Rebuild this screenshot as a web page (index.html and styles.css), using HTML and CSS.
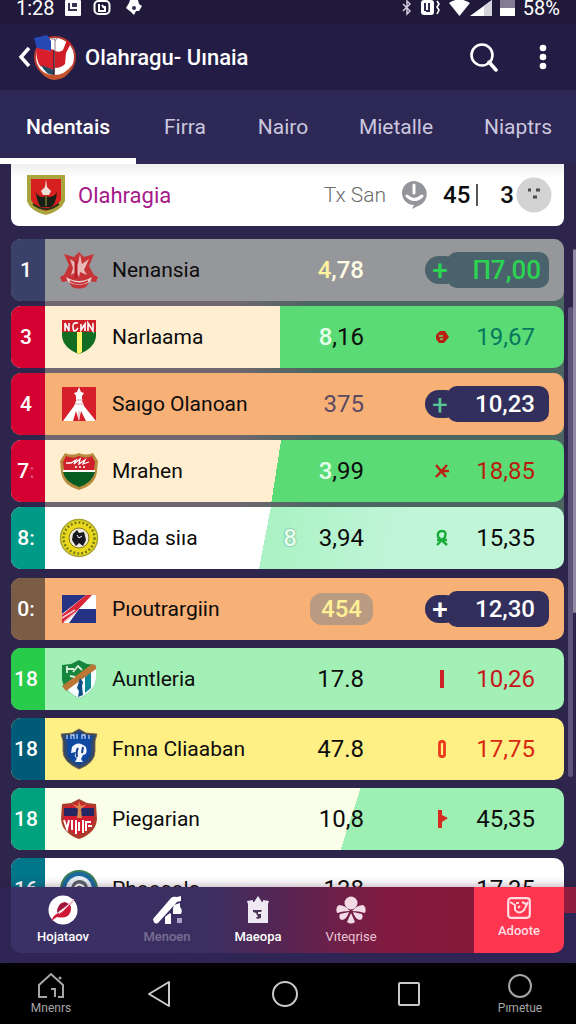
FILE: index.html
```
<!DOCTYPE html>
<html lang="id">
<head>
    <meta charset="UTF-8">
    <meta name="viewport" content="width=device-width, initial-scale=1.0">
    <title>Olahragu- Uınaia</title>
    <link rel="stylesheet" href="styles.css">
</head>
<body>
    <div class="status-bar">
        <span class="clock">1:28</span>
        <svg width="16" height="16" viewBox="0 0 16 16"><rect width="16" height="16" rx="1" fill="#fff"/><path d="M3 3h9v8H3z" fill="#3a3355"/><path d="M6 3v5h6" stroke="#fff" stroke-width="2" fill="none"/></svg>
        <svg width="18" height="16" viewBox="0 0 18 16"><rect x="1.500" y="1" width="15" height="13" rx="4" fill="none" stroke="#fff" stroke-width="2"/><path d="M6 4v7h6V6M9 5l2 3" fill="none" stroke="#fff" stroke-width="2"/></svg>
        <svg class="flower" width="18" height="16" viewBox="0 0 18 16"><path d="M5 0h8l1 4 3 2-3 5h-3l-2 4-3-3-5-4 3-5z" fill="#fff"/><circle cx="9" cy="8" r="2" fill="#33284d"/></svg>
        <div class="status-right">
            <svg width="10" height="16" viewBox="0 0 10 16"><path d="M1 4l7 7-3 3V1l3 3-7 7" fill="none" stroke="#d8d4e2" stroke-width="1.400"/></svg>
            <svg width="21" height="16" viewBox="0 0 21 16"><rect x="1" y="0" width="13" height="15" rx="3" fill="#fff"/><path d="M5 3v8M9 3v8H6" stroke="#33284d" stroke-width="2" fill="none"/><path d="M17 1l2 3-2 3 2 3-2 4" fill="none" stroke="#fff" stroke-width="1.600"/></svg>
            <svg width="43" height="16" viewBox="0 0 43 16"><path d="M0 3Q10-4 21 3L10.500 16z" fill="#fff"/><path d="M21 16L43 0v16z" fill="#fff"/><path d="M35 6l8-6v16h-8z" fill="#d5d3dc"/></svg>
            <svg class="battery" width="15" height="16" viewBox="0 0 15 16"><path d="M0 0h15v16H0z" fill="#fff"/><path d="M0 0h15v8H0z" fill="#827d92"/></svg>
            <span class="charge">58%</span>
        </div>
    </div>

    <header class="app-bar">
        <button class="icon-button back" aria-label="Kembali">
            <svg width="13" height="22" viewBox="0 0 13 22"><path d="M11 2L3 11l8 9" fill="none" stroke="#fff" stroke-width="3.500"/></svg>
        </button>
        <svg class="logo" width="42" height="48" viewBox="0 0 42 48">
            <circle cx="21" cy="24" r="20" fill="#fff" stroke="#b5372f" stroke-width="2"/>
            <path d="M0 5l13-3 4 6v10L3 16z" fill="#2549b5"/>
            <path d="M3 15l14 3v-2l3 1v20L6 33Q1 24 3 15z" fill="#d91f2c"/>
            <path d="M21 18q5 2 8-1l4-10 4 3-5 10-1 11q-4 4-10 4z" fill="#cf1c26"/>
            <path d="M7 32l13 5v5Q12 42 7 32z" fill="#20495f"/>
            <path d="M20 17v26" stroke="#46172a" stroke-width="1.500"/>
            <path d="M17 6h4v12M23 5l-2 3" fill="none" stroke="#98808f"/>
            <path d="M4 34q6 8 16 8 11 0 18-10-3 14-18 15Q9 46 4 34z" fill="#c4532d"/>
        </svg>
        <h1>Olahragu- Uınaia</h1>
        <button class="icon-button search" aria-label="Cari">
            <svg width="30" height="30" viewBox="0 0 30 30"><circle cx="13" cy="13" r="10.500" fill="none" stroke="#fff" stroke-width="2.600"/><path d="M20 20l7 8" stroke="#fff" stroke-width="3.500" stroke-linecap="round"/></svg>
        </button>
        <button class="icon-button more" aria-label="Menu">
            <svg width="8" height="26" viewBox="0 0 8 26" fill="#fff"><circle cx="4" cy="4" r="3.300"/><circle cx="4" cy="13" r="3.300"/><circle cx="4" cy="22" r="3.300"/></svg>
        </button>
    </header>

    <nav class="tabs">
        <a href="#" class="tab active">Ndentais</a>
        <a href="#" class="tab">Firra</a>
        <a href="#" class="tab">Nairo</a>
        <a href="#" class="tab">Mietalle</a>
        <a href="#" class="tab">Niaptrs</a>
    </nav>

    <main class="content">
        <section class="league">
            <svg class="league-crest" width="40" height="42" viewBox="0 0 40 42">
                <path d="M1 1h38v26q-4 10-19 14Q4 37 1 27z" fill="#a9a43c"/>
                <path d="M5 5h30v21q-5 8-15 11Q9 34 5 26z" fill="#d5201f"/>
                <path d="M10 18q3 7 10 4 7 3 11-4-1 12-6 15h-10q-4-4-5-15z" fill="#162016"/>
                <path d="M20 5l1 8 4 4-2 4h-6l-2-4 4-4z" fill="#ecdfd5"/>
                <path d="M20 22v10" stroke="#a9a43c"/>
                <path d="M7 30q13 10 26 0" fill="none" stroke="#2f3217" stroke-width="2"/>
            </svg>
            <h2>Olahragia</h2>
            <span class="league-info">Tx San</span>
            <svg class="chat" width="28" height="30" viewBox="0 0 28 30"><path d="M14 1a13 13 0 0 1 8 23l-10 5 2-4A12 12 0 0 1 14 1z" fill="#93959a"/><path d="M14 5v8M7 16q7 7 15 0" fill="none" stroke="#fff" stroke-width="3" stroke-linecap="round"/></svg>
            <strong>45</strong>
            <span class="divider"></span>
            <strong>3</strong>
            <svg class="face" width="36" height="36" viewBox="0 0 36 36"><circle cx="18" cy="18" r="17.500" fill="#d3d3d3"/><path d="M12 13h3M20 13h4M17 20h4" stroke="#4b4b4b" stroke-width="3"/></svg>
        </section>

        <table class="standings">
            <tbody class="group top-group">
                <tr class="row grey">
                    <td class="rank navy">1</td>
                    <td class="crest"><svg width="40" height="40" viewBox="0 0 40 40"><path d="M5 4l10 3 5-5 5 5 10-3-5 12 5 9 4 2-2 5-6-1-4 6q-7 3-14 0l-4-6-6 1-2-5 4-2 5-10z" fill="#c53336"/><path d="M11 9l8 5 2-10 2 10 7-5-5 11 3 5-7-3-1 5-3-5-5 3 2-7z" fill="#e7b9b8"/><path d="M17 11v17" stroke="#b71f27" stroke-width="3"/><path d="M7 27q13 8 26 0l-2 5q-11 6-22 0z" fill="#ead0cf"/><path d="M11 31q9 5 18 0" stroke="#c53336" fill="none" stroke-width="2"/></svg></td>
                    <td class="name">Nenansia</td>
                    <td class="points"><span class="cream">4</span><span class="pale">,78</span></td>
                    <td class="change pill slate"><span class="mark">+</span><span class="total large">П7,00</span></td>
                </tr>
                <tr class="row split-straight">
                    <td class="rank red">3</td>
                    <td class="crest"><svg width="36" height="36" viewBox="0 0 36 36"><path d="M1 1h34v16q-1 12-17 18Q2 29 1 17z" fill="#126c22"/><path d="M1 1h34v12H1z" fill="#cd2028"/><path d="M16 13h5v20l-3 2-2-1z" fill="#fff36b"/><path d="M4 12V4l4 8V4M17 4q-6-1-5 5t5 0M20 5v6l4-6v7M27 12V4l5 8V4" fill="none" stroke="#fff" stroke-width="1.600"/></svg></td>
                    <td class="name">Narlaama</td>
                    <td class="points"><span class="white">8</span>,16</td>
                    <td class="change teal-text"><span class="mark"><svg width="14" height="14" viewBox="0 0 14 14"><path d="M5 1h5l4 6-5 6H4L1 9V5z" fill="#b92112"/><path d="M4 6h4M5 9h3" stroke="#69dc70" stroke-width="1.500"/></svg></span><span class="total">19,67</span></td>
                </tr>
                <tr class="row orange">
                    <td class="rank red">4</td>
                    <td class="crest"><svg width="36" height="36" viewBox="0 0 36 36"><path d="M1 1h34v34H1z" fill="#d61f2a"/><path d="M18 1l2 5 3 1-2 3v5l2 5 12 15H25l-5-10-2 10-3-10-3 10H2l11-15 2-5v-5l-2-3 3-1z" fill="#fff"/><path d="M15 14h7M14 18h9M18 25v8" stroke="#d7a8aa"/></svg></td>
                    <td class="name">Saıgo Olanoan</td>
                    <td class="points muted">375</td>
                    <td class="change pill dark green-mark"><span class="mark">+</span><span class="total">10,23</span></td>
                </tr>
                <tr class="row split-cream">
                    <td class="rank red">7<span class="dots">:</span></td>
                    <td class="crest"><svg width="40" height="40" viewBox="0 0 40 40"><path d="M6 2q7 3 14 0 7 3 14 0l5 8-1 10q-1 14-18 19Q3 34 2 20L1 10z" fill="#b98b3e"/><path d="M7 5q7 3 13 0 7 3 13 0l3 6-1 8H5L4 11z" fill="#cf202c"/><path d="M4 21h32q-3 11-16 15Q6 31 4 21z" fill="#075d21"/><path d="M4 20h32" stroke="#fff" stroke-width="2"/><path d="M7 12h5l5-3-2 4 6-5-1 5 6-4-2 4 6-2M16 16h2M20 16h2M24 16h2" fill="none" stroke="#fff" stroke-width="1.300"/></svg></td>
                    <td class="name">Mrahen</td>
                    <td class="points"><span class="white">3</span>,99</td>
                    <td class="change brick-text"><span class="mark"><svg width="16" height="16" viewBox="0 0 16 16"><path d="M2 2l10 12M13 2L2 14M7 8h8" stroke="#bd2012" stroke-width="2.400"/></svg></span><span class="total">18,85</span></td>
                </tr>
                <tr class="row split-white">
                    <td class="rank teal">8:</td>
                    <td class="crest"><svg width="40" height="40" viewBox="0 0 40 40"><circle cx="20" cy="20" r="18.500" fill="#ead81d" stroke="#a5a331" stroke-width="1.500"/><circle cx="20" cy="20" r="15.500" fill="none" stroke="#767b1b" stroke-width="2.500" stroke-dasharray="2 2"/><circle cx="20" cy="20" r="10" fill="#eee9dc" stroke="#84760f"/><path d="M14 16l4-4 2 3 5-1 2 8-3 6-4-3-3 3-4-6z" fill="#17181d"/><path d="M18 17l2 3 3-2" stroke="#fff" fill="none"/></svg></td>
                    <td class="name">Bada siıa</td>
                    <td class="points"><span class="ghost">8</span>3,94</td>
                    <td class="change"><span class="mark"><svg width="14" height="18" viewBox="0 0 14 18"><path d="M2 16L10 8q2-6-3-6T3 8l9 8M2 11h10" fill="none" stroke="#16ac37" stroke-width="2.400"/></svg></span><span class="total">15,35</span></td>
                </tr>
            </tbody>
            <tbody class="group">
                <tr class="row orange">
                    <td class="rank brown">0:</td>
                    <td class="crest"><svg width="36" height="30" viewBox="0 0 36 30"><path d="M1 1h34v28H1z" fill="#fff"/><path d="M1 1h24L1 20zM18 15h17v14H8z" fill="#263284"/><path d="M1 21L25 1h6L12 21 2 29H1z" fill="#d92739"/><path d="M1 24l13-8M3 28l11-9" stroke="#f4c7cf" stroke-width="1.500"/></svg></td>
                    <td class="name">Pıoutrargiin</td>
                    <td class="points"><span class="points-pill">454</span></td>
                    <td class="change pill dark"><span class="mark">+</span><span class="total">12,30</span></td>
                </tr>
                <tr class="row mint">
                    <td class="rank green">18</td>
                    <td class="crest"><svg width="36" height="40" viewBox="0 0 36 40"><path d="M1 6l9-1 8-4 8 4 9 1v14q-1 12-17 19Q2 32 1 20z" fill="#16853d"/><path d="M35 6v14q-1 12-17 19Q9 35 5 29z" fill="#f5fcff"/><path d="M30 11v18l-6 5V17z" fill="#0e8894"/><path d="M1 27L31 5l4 2v3L5 32z" fill="#b97634"/><path d="M19 19l3 4-1 4 1 9-5 2 1-6-2-3z" fill="#104d86"/><path d="M5 10h8M6 7v7M12 13l5-6 4 4M9 17l5 1" stroke="#d9efd9" stroke-width="1.800" fill="none"/></svg></td>
                    <td class="name">Auntleria</td>
                    <td class="points">17.8</td>
                    <td class="change red-text"><span class="mark"><svg width="4" height="18" viewBox="0 0 4 18"><path d="M0 0h4v18H0z" fill="#cf2028"/></svg></span><span class="total">10,26</span></td>
                </tr>
                <tr class="row yellow">
                    <td class="rank petrol">18</td>
                    <td class="crest"><svg width="38" height="42" viewBox="0 0 38 42"><path d="M1 6l11-1 7-4 7 4 11 1-2 7v10q0 12-16 18Q3 34 3 23V13z" fill="#344965" stroke="#806d4e"/><path d="M5 8q9 0 14-4 5 4 14 4l-2 6v9q0 9-12 14Q7 32 7 23v-9z" fill="#0e48a1"/><path d="M7 11V7M11 11V7h3v4M17 11V6M22 11V7h3v4M29 11V7" stroke="#b9cdf0" stroke-width="1.300" fill="none"/><path d="M12 19q6-7 14 0 2 8-3 8l-2 4 2 3h-8l2-4q-4-1-1-6l-5 1z" fill="#f2f6ff"/><path d="M18 20q-2 3-1 9M23 19l-1 6" stroke="#123d88" stroke-width="2" fill="none"/></svg></td>
                    <td class="name">Fnna Cliaaban</td>
                    <td class="points">47.8</td>
                    <td class="change scarlet-text"><span class="mark"><svg width="8" height="18" viewBox="0 0 8 18"><rect x="1.500" y="1.500" width="5" height="15" rx="2" fill="none" stroke="#ed3a1a" stroke-width="2.800"/></svg></span><span class="total">17,75</span></td>
                </tr>
                <tr class="row split-mint">
                    <td class="rank emerald">18</td>
                    <td class="crest"><svg width="38" height="42" viewBox="0 0 38 42"><path d="M2 6l9-1 8-4 8 4 9 1 1 15q-1 14-18 20Q2 35 1 21z" fill="#ad3b2c"/><path d="M4 9l9-2 6-3 6 3 9 2v11q-1 11-15 17Q4 31 4 20z" fill="#d41e32"/><path d="M4 10h30v8H4z" fill="#252762"/><path d="M12 6l6 2 1-5 2 5 6-2-6 5 1 9h-5l1-9z" fill="#d98649"/><path d="M4 22l3 9 2-9M12 22v10M16 22v14M19 24v9M23 22v13M26 33v-9h5M28 28h4" stroke="#fff" stroke-width="2" fill="none"/></svg></td>
                    <td class="name">Piegarian</td>
                    <td class="points">10,8</td>
                    <td class="change"><span class="mark"><svg width="12" height="18" viewBox="0 0 12 18"><path d="M2 0h4v5l6 3-6 4v6H2z" fill="#d72b20"/></svg></span><span class="total">45,35</span></td>
                </tr>
                <tr class="row plain">
                    <td class="rank sea">16</td>
                    <td class="crest"><svg width="40" height="40" viewBox="0 0 40 40"><circle cx="20" cy="20" r="19" fill="#397f55"/><circle cx="20" cy="20" r="17" fill="#1c69a0"/><circle cx="20" cy="20" r="13" fill="#e5eef4"/><path d="M12 20q1-9 9-9 8 1 8 9l-5 8h-7z" fill="#5a606a"/><path d="M16 18q4-5 9 0" stroke="#fff" stroke-width="2" fill="none"/></svg></td>
                    <td class="name">Phoosola</td>
                    <td class="points">138</td>
                    <td class="change"><span class="mark"></span><span class="total">17,35</span></td>
                </tr>
            </tbody>
        </table>
        <div class="scroll-track"></div>
        <div class="scroll-thumb"></div>
    </main>

    <div class="dock">
        <nav class="bottom-nav">
            <a href="#">
                <svg width="30" height="30" viewBox="0 0 30 30"><circle cx="15" cy="15" r="14.500" fill="#fff"/><path d="M28 3L14 17Q6 18 3 26l6-4q10 2 13-4 2-5 0-8z" fill="#cf1737"/><path d="M9 18q0-10 8-11l4 2z" fill="#a3163a"/><path d="M11 19q6-5 15-15" stroke="#f1c5cf" fill="none"/></svg>
                <span>Hojataov</span>
            </a>
            <a href="#" class="dim">
                <svg width="32" height="30" viewBox="0 0 32 30" fill="#fff"><path d="M2 24L20 3q2-2 6-1l4-1v5l-4 1L7 28q-4 2-5-4z"/><path d="M23 10l6-2v4q3 3 1 7h-8v-6zM14 22l5-4 1 1v10h-6z"/><path d="M26 23h5v5h-5z" fill="#a8a2cc"/></svg>
                <span>Menoen</span>
            </a>
            <a href="#">
                <svg width="24" height="30" viewBox="0 0 24 30"><path d="M2 7h6l4-6 4 6h6v21H2z" fill="#ede8f1"/><path d="M1 6l6-1v4H2zM23 6l-6-1v4h5z" fill="#ede8f1"/><path d="M7 15h9l-1 2h-3v2h3v4l-4 1-1-2h2l-2-4-3-1z" fill="#4b3357"/></svg>
                <span>Maeopa</span>
            </a>
            <a href="#" class="wide">
                <svg width="30" height="30" viewBox="0 0 30 30" fill="#f2dbe5"><circle cx="15" cy="8" r="6.500"/><path d="M14 16Q7 16 1 18-1 12 3 10q6 0 11 6zM16 16q7 0 13 2 2-6-2-8-6 0-11 6zM13 17l-9 2q-2 5 2 6 5-1 7-8zM17 17l9 2q2 5-2 6-5-1-7-8zM15 18l-4 9q4 3 8 0z"/></svg>
                <span>Vıteqrise</span>
            </a>
            <a href="#" class="highlight">
                <svg width="24" height="22" viewBox="0 0 24 22"><rect x="1.200" y="1.200" width="21.600" height="19.600" rx="3" fill="none" stroke="#ffdce2" stroke-width="2.200"/><path d="M3 5l5 3v5q4 5 9 0l4-8M9 6h3M15 5l4 2M11 11l2-2" fill="none" stroke="#ffdce2" stroke-width="2"/></svg>
                <span>Adoote</span>
            </a>
        </nav>
        <div class="edge-strip"></div>
    </div>

    <footer class="system-nav">
        <button>
            <svg width="28" height="28" viewBox="0 0 28 28"><path d="M10 25H2V13L14 2l12 11v12h-5M14 17h4v8" fill="none" stroke="#a6a6a6" stroke-width="2"/><circle cx="23" cy="6" r="1.500" fill="#a6a6a6"/></svg>
            <span>Mnenrs</span>
        </button>
        <button aria-label="Mundur"><svg width="24" height="28" viewBox="0 0 24 28"><path d="M22 2v24L2 14z" fill="none" stroke="#c9c9c9" stroke-width="2" stroke-linejoin="round"/></svg></button>
        <button aria-label="Beranda"><svg width="28" height="28" viewBox="0 0 28 28"><circle cx="14" cy="14" r="12" fill="none" stroke="#c9c9c9" stroke-width="2"/></svg></button>
        <button aria-label="Aplikasi"><svg width="24" height="26" viewBox="0 0 24 26"><rect x="2" y="2" width="20" height="22" rx="1" fill="none" stroke="#c9c9c9" stroke-width="2"/></svg></button>
        <button>
            <svg width="28" height="28" viewBox="0 0 28 28"><circle cx="14" cy="14" r="11" fill="none" stroke="#a6a6a6" stroke-width="2"/></svg>
            <span>Pımetue</span>
        </button>
    </footer>
</body>
</html>
```

FILE: styles.css
```
* {
    box-sizing: border-box;
}
body {
    margin: 0;
    height: 100vh;
    display: flex;
    flex-direction: column;
    overflow: hidden;
    background-color: #2d254b;
    color: #0c0c0c;
    font-family: Roboto, "Noto Sans", sans-serif;
}
svg {
    display: block;
    flex-shrink: 0;
}
a {
    text-decoration: none;
}
button {
    padding: 0;
    border: none;
    background: none;
    font-family: inherit;
    cursor: pointer;
}

/* status bar */
.status-bar {
    display: flex;
    align-items: center;
    height: 24px;
    padding: 0 16px 8px;
    background-color: #21193a;
    color: #fff;
    line-height: 16px;
    flex-shrink: 0;
}
.clock {
    width: 49px;
    font-size: 20px;
}
.status-bar > svg {
    margin-right: 12px;
}
.status-bar > .flower {
    margin-left: 2px;
}
.status-right {
    display: flex;
    align-items: center;
    gap: 8px;
    margin-left: auto;
}
.charge {
    font-size: 20px;
}

/* app bar */
.app-bar {
    display: flex;
    align-items: center;
    height: 66px;
    padding: 0 29px 0 18px;
    background-color: #231d45;
    color: #fff;
    flex-shrink: 0;
}
.logo {
    margin: 0 9px 0 3px;
}
h1 {
    flex: 1;
    margin: 0;
    font-size: 22px;
    font-weight: 500;
}
.more {
    margin-left: 40px;
}

/* tabs */
.tabs {
    display: flex;
    height: 74px;
    background-color: #2e2857;
    flex-shrink: 0;
}
.tab {
    flex: 98;
    display: flex;
    align-items: center;
    justify-content: center;
    padding-top: 6px;
    border-bottom: 6px solid transparent;
    color: #cbc7de;
    font-size: 21px;
}
.tab.active {
    flex: 136;
    border-color: #fff;
    color: #fff;
    font-weight: 500;
}
.tab:nth-child(4) {
    flex: 128;
}
.tab:nth-child(5) {
    flex: 116;
}

/* content */
.content {
    position: relative;
    flex: 1;
    min-height: 0;
    overflow: hidden;
    padding: 0 12px 0 11px;
}
.league {
    display: flex;
    align-items: center;
    height: 62px;
    margin-bottom: 13px;
    padding: 0 12px 0 15px;
    border-radius: 0 0 8px 8px;
    background: linear-gradient(#eeeeec, #fff 14px);
}
h2 {
    flex: 1;
    margin: 0 0 0 12px;
    color: #a5188a;
    font-size: 22px;
    font-weight: 400;
}
.league-info {
    color: #6d6d6d;
    font-size: 21px;
    font-weight: 300;
}
.chat {
    margin: 0 15px 0 14px;
}
.league strong {
    font-size: 24px;
    font-weight: 500;
}
.divider {
    width: 2px;
    height: 22px;
    margin: 0 22px 0 6px;
    background-color: #555;
}
.face {
    margin-left: 2px;
}

/* standings */
.standings,
.group {
    display: flex;
    flex-direction: column;
}
.standings {
    gap: 9px;
}
.group {
    gap: 8px;
}
.top-group {
    gap: 5px;
    border-radius: 10px;
    background: linear-gradient(to right, transparent 34px, #726770 34px, #726770 40%, #4b6660 55%);
}
.row {
    display: grid;
    grid-template-columns: 34px 67px 1fr 96px 200px;
    height: 62px;
    overflow: hidden;
    border-radius: 10px;
}
.row td {
    display: flex;
    align-items: center;
    padding: 0;
}
.grey { background-color: #96979b; }
.orange { background-color: #f7b076; }
.mint { background-color: #a2f0b6; }
.yellow { background-color: #fff086; }
.plain { background-color: #fff; }
.split-straight { background: linear-gradient(90deg, #ffefd0 48.6%, #5adb76 48.6%); }
.split-cream { background: linear-gradient(99deg, #ffefd0 48%, #5adb76 48%); }
.split-white { background: linear-gradient(101deg, #fff 46%, #aaf2c4 46%, #c0f5d8 70%); }
.split-mint { background: linear-gradient(108deg, #f9ffe8 61%, #9eefb4 61%); }

.row .rank {
    justify-content: center;
    padding-right: 4px;
    color: #fff;
    font-size: 21px;
    font-weight: 500;
}
.navy { background-color: #3a4169; }
.red { background-color: #d50032; }
.teal { background-color: #009b87; }
.brown { background-color: #7b5d46; }
.green { background-color: #29cb4b; }
.petrol { background-color: #005b78; }
.emerald { background-color: #00a17d; }
.sea { background-color: #00768b; }
.dots {
    opacity: 0.3;
}
.row .crest {
    justify-content: center;
}
.name {
    font-size: 21px;
    white-space: nowrap;
}
.row .points {
    justify-content: flex-end;
    font-size: 24px;
}
.cream { color: #fff3a0; font-weight: 500; }
.pale { color: #fffbe4; font-weight: 500; }
.white { color: #e4ffe9; font-weight: 500; }
.row .muted { color: #5b4a62; }
.ghost {
    margin-right: 22px;
    color: #e6fff0;
    font-weight: 500;
    text-shadow: 0 0 2px #4d8b68;
}
.points-pill {
    margin-right: -9px;
    padding: 2px 11px;
    border-radius: 12px;
    background-color: #b89b80;
    color: #fff096;
    font-weight: 500;
}

/* rank change and total */
.row .change {
    justify-content: flex-end;
    padding-right: 15px;
}
.mark {
    display: flex;
    align-items: center;
    justify-content: center;
    width: 34px;
    height: 28px;
    margin-right: -12px;
    border-radius: 14px;
    font-size: 28px;
}
.total {
    width: 102px;
    padding-right: 14px;
    border-radius: 10px;
    font-size: 24px;
    line-height: 36px;
    text-align: right;
}
.total.large {
    padding-right: 8px;
    font-size: 26px;
}
.pill {
    color: #fff;
    font-weight: 500;
}
.pill .mark {
    padding-right: 4px;
}
.dark .mark,
.dark .total {
    background-color: #322f5c;
}
.slate .mark,
.slate .total {
    background-color: #4a626c;
    color: #2bd351;
}
.green-mark .mark {
    color: #58c993;
    font-weight: 400;
}
.teal-text { color: #08775e; }
.brick-text { color: #b91d0d; }
.red-text { color: #c4161c; }
.scarlet-text { color: #d82810; }

/* scroll indicators beside the list */
.scroll-track,
.scroll-thumb {
    position: absolute;
    border-radius: 3px;
}
.scroll-track {
    top: 143px;
    right: 3px;
    width: 5px;
    height: 470px;
    background-color: #5d5579;
}
.scroll-thumb {
    top: 85px;
    right: 0;
    width: 3px;
    height: 364px;
    background-color: #8f89a3;
}

/* bottom navigation */
.dock {
    display: flex;
    padding: 0 0 10px 11px;
    flex-shrink: 0;
    z-index: 1;
    background-color: #2e2554;
    box-shadow: 0 -2px 8px rgba(60, 20, 50, 0.3);
}
.bottom-nav {
    flex: 1;
    display: grid;
    grid-template-columns: 104fr 104fr 78fr 177fr 90fr;
    height: 66px;
    overflow: hidden;
    border-radius: 0 0 10px 10px;
    background: linear-gradient(to right, #3a3166, #3b2e61 36%, #5d234f 52%, #821b40 68%, #8b1838);
}
.bottom-nav a {
    display: flex;
    flex-direction: column;
    align-items: center;
    padding-top: 8px;
    color: #fff;
    font-size: 13px;
    font-weight: 500;
    line-height: 24px;
}
.bottom-nav .dim span {
    opacity: 0.3;
}
.bottom-nav .wide {
    padding-right: 69px;
    color: #ecc5d5;
    font-weight: 400;
}
.bottom-nav .highlight {
    padding-top: 10px;
    background-color: #ff3650;
    color: #ffdce2;
}
.edge-strip {
    width: 12px;
    height: 26px;
    background-color: #901c40;
}

/* system navigation */
.system-nav {
    display: grid;
    grid-template-columns: 102fr 114fr 138fr 110fr 112fr;
    height: 61px;
    background-color: #000;
    flex-shrink: 0;
}
.system-nav button {
    display: flex;
    flex-direction: column;
    align-items: center;
    justify-content: center;
    color: #a6a6a6;
    font-size: 12px;
    line-height: 16px;
}
```
